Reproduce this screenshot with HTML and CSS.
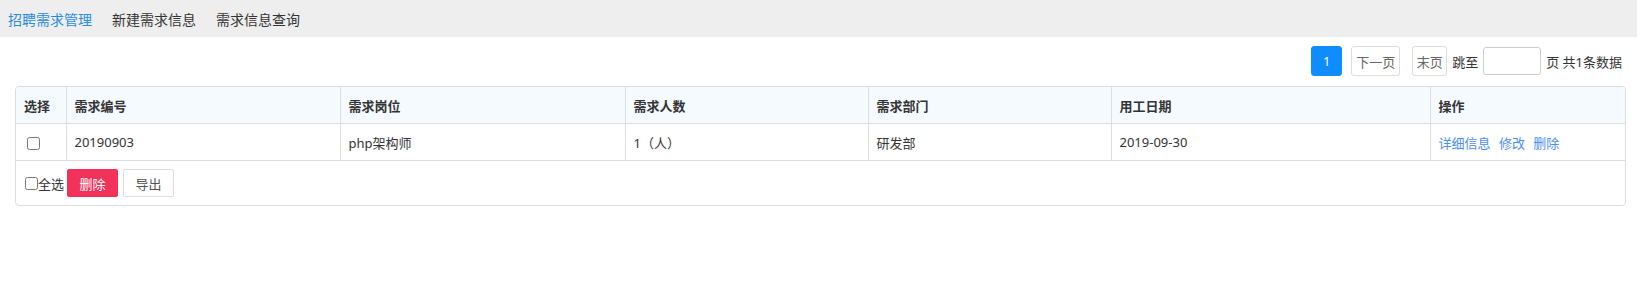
FILE: index.html
```html
<!DOCTYPE html>
<html lang="zh-CN">
<head>
  <meta charset="UTF-8">
  <meta name="viewport" content="width=device-width, initial-scale=1.0">
  <title>招聘需求管理</title>
  <link rel="stylesheet" href="styles.css">
</head>
<body>

<nav class="topnav">
  <a href="#manage" class="active">招聘需求管理</a>
  <a href="#new">新建需求信息</a>
  <a href="#query">需求信息查询</a>
</nav>

<div class="main">
  <div class="pager">
    <button class="page-btn current">1</button>
    <button class="page-btn next">下一页</button>
    <button class="page-btn last">末页</button>
    <span class="jump">跳至</span>
    <input type="text" class="page-input">
    <span class="total">页 共1条数据</span>
  </div>

  <div class="grid">
    <table>
      <colgroup>
        <col style="width: 50px">
        <col style="width: 274px">
        <col style="width: 285px">
        <col style="width: 243px">
        <col style="width: 243px">
        <col style="width: 319px">
        <col>
      </colgroup>
      <thead>
        <tr>
          <th>选择</th>
          <th>需求编号</th>
          <th>需求岗位</th>
          <th>需求人数</th>
          <th>需求部门</th>
          <th>用工日期</th>
          <th>操作</th>
        </tr>
      </thead>
      <tbody>
        <tr>
          <td><input type="checkbox" class="row-check"></td>
          <td>20190903</td>
          <td>php架构师</td>
          <td>1（人）</td>
          <td>研发部</td>
          <td>2019-09-30</td>
          <td class="actions">
            <a href="#detail">详细信息</a>
            <a href="#edit">修改</a>
            <a href="#delete">删除</a>
          </td>
        </tr>
      </tbody>
    </table>
    <div class="grid-foot">
      <label class="check-all"><input type="checkbox">全选</label>
      <button class="btn btn-danger">删除</button>
      <button class="btn">导出</button>
    </div>
  </div>
</div>

</body>
</html>
```

FILE: styles.css
```css
/* page base */
body {
  margin: 0;
  font-family: "Noto Sans", "Noto Sans CJK SC", sans-serif;
  font-size: 13px;
  color: #333;
}
.topnav {
  display: flex;
  align-items: center;
  gap: 20px;
  height: 37px;
  padding: 0 8px;
  background-color: #eee;
  font-size: 14px;
}
.topnav a {
  color: #333;
  text-decoration: none;
}
.topnav a.active {
  color: #2a8ae0;
}
.main {
  padding: 0 11px 0 15px;
}

/* pagination */
.pager {
  display: flex;
  justify-content: flex-end;
  align-items: center;
  margin-top: 9px;
  padding-right: 4px;
  height: 30px;
}
.page-btn {
  height: 30px;
  padding: 0;
  border: 1px solid #ddd;
  border-radius: 3px;
  background: #fff;
  color: #666;
  font-family: inherit;
  font-size: 13px;
}
.page-btn.current {
  width: 31px;
  border-color: #0f8cfd;
  background: #0f8cfd;
  color: #fff;
}
.page-btn.next {
  width: 49px;
  margin-left: 9px;
}
.page-btn.last {
  width: 35px;
  margin-left: 12px;
}
.jump {
  margin-left: 5px;
}
.page-input {
  width: 58px;
  height: 28px;
  box-sizing: border-box;
  border: 1px solid #ccc;
  border-radius: 3px;
  margin: 0 5px;
}

/* table */
.grid {
  margin-top: 10px;
  border: 1px solid #ddd;
  border-radius: 4px;
  overflow: hidden;
}
.grid table {
  width: 100%;
  border-collapse: collapse;
  table-layout: fixed;
}
.grid th,
.grid td {
  height: 36px;
  padding: 0 8px;
  text-align: left;
  border-right: 1px solid #ddd;
  border-bottom: 1px solid #ddd;
  white-space: nowrap;
}
.grid th:last-child,
.grid td:last-child {
  border-right: none;
}
.grid th {
  background-color: #f5faff;
  font-weight: bold;
  color: #333;
}
.row-check {
  margin: 0 0 0 3px;
  vertical-align: middle;
}
.actions a {
  color: #4a8ff5;
  text-decoration: none;
  margin-right: 5px;
}
.grid-foot {
  display: flex;
  align-items: center;
  gap: 5px;
  padding: 8px 6px;
}
.check-all {
  display: flex;
  align-items: center;
  margin-right: -2px;
}
.check-all input {
  margin: 0 0 0 3px;
}
.btn {
  height: 28px;
  width: 51px;
  border: 1px solid #ddd;
  border-radius: 2px;
  background: #fff;
  color: #555;
  font-family: inherit;
  font-size: 13px;
}
.btn-danger {
  border-color: #f2325b;
  background: #f2325b;
  color: #fff;
}
```
